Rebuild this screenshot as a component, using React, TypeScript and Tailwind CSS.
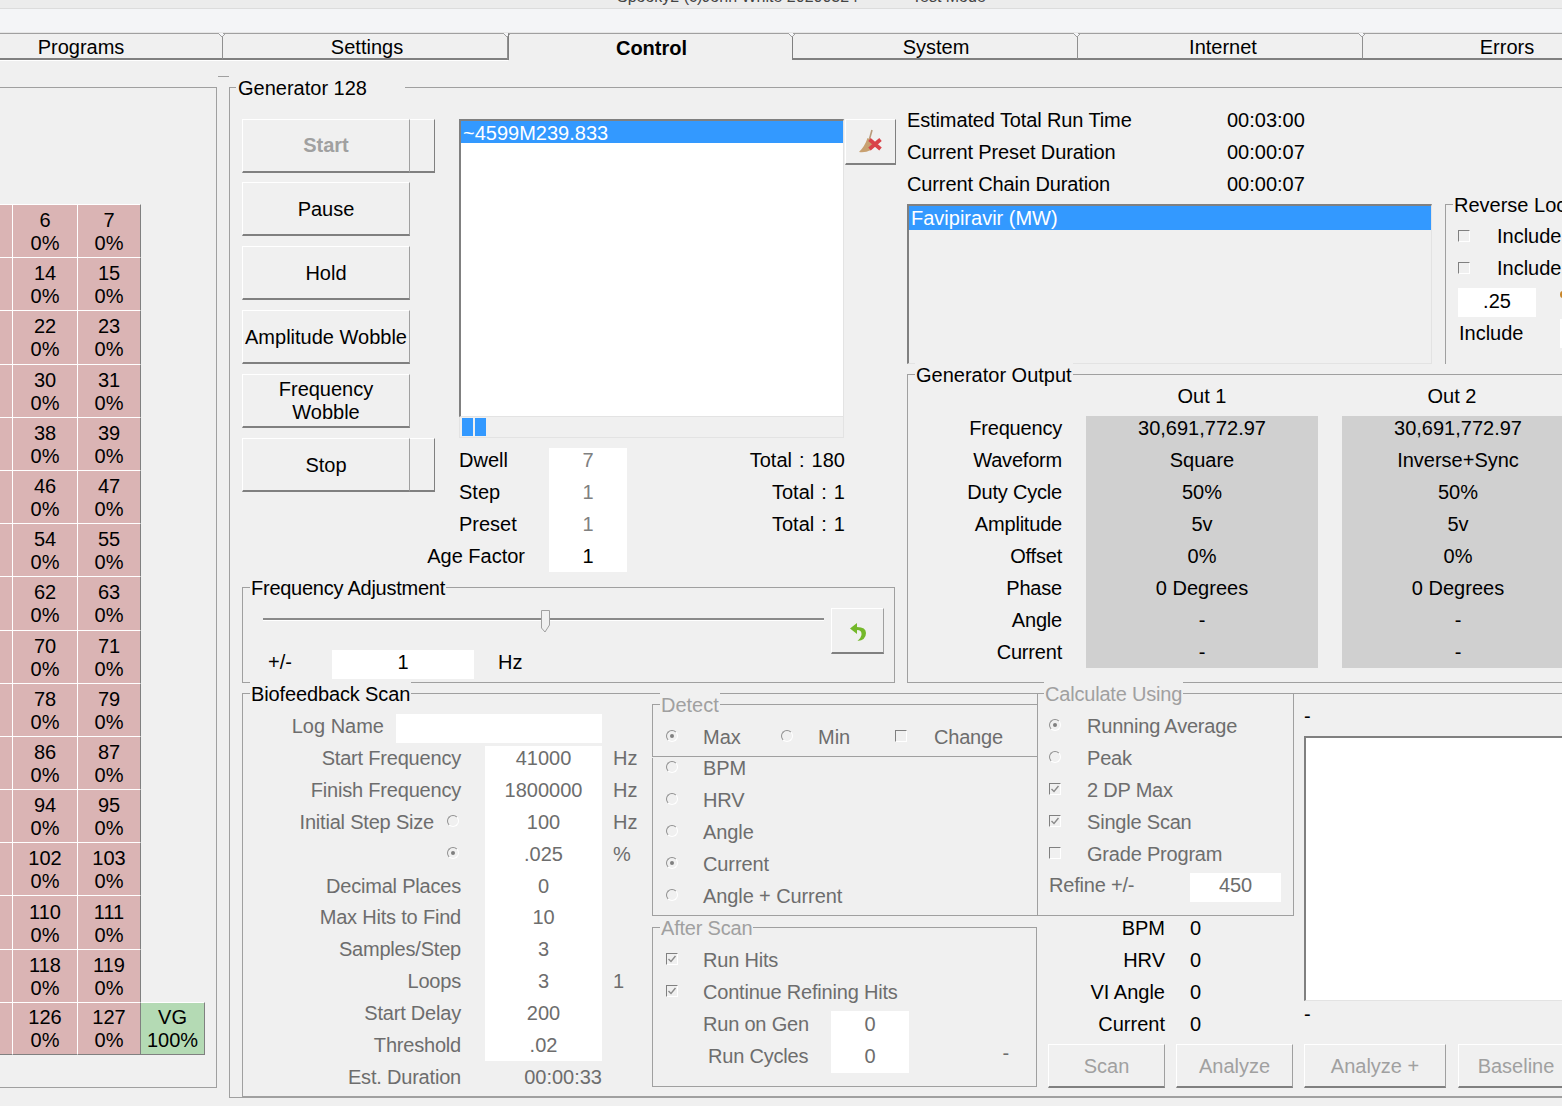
import React from "react";

const line = "border-[#a0a0a0]";
const dim = "text-[#6d6d6d]";

function Radio({ on = false }: { on?: boolean }) {
  return (
    <span className="mb-[2px] flex h-[12px] w-[12px] shrink-0 items-center justify-center rounded-full border border-[#909090] border-r-white border-b-white bg-[#f0f0f0]">
      {on && <span className="h-[4px] w-[4px] rounded-full bg-[#808080]" />}
    </span>
  );
}

function Check({ on = false }: { on?: boolean }) {
  return (
    <span className="mb-[2px] flex h-[12px] w-[12px] shrink-0 items-center justify-center border border-[#808080] border-r-white border-b-white bg-[#f0f0f0]">
      {on && (
        <svg width="10" height="10" viewBox="0 0 10 10">
          <path d="M1.5 5 L4 7.5 L8.5 2" fill="none" stroke="#8a8a8a" strokeWidth="1.4" />
        </svg>
      )}
    </span>
  );
}

function Legend({ text, gray = false, cls = "left-[7px]" }: { text: string; gray?: boolean; cls?: string }) {
  return (
    <span className={`absolute -top-[12px] ${cls} bg-[#f0f0f0] px-px leading-[24px] whitespace-nowrap ${gray ? "text-[#a0a0a0]" : "text-black"}`}>
      {text}
    </span>
  );
}

function Btn({ label, w = "w-[168px]", h = "h-[54px]", cls = "pt-[2px] text-black" }: { label: React.ReactNode; w?: string; h?: string; cls?: string }) {
  return (
    <div className={`${w} ${h} shrink-0 flex items-center justify-center text-center leading-[23px] whitespace-nowrap border border-t-white border-l-white border-r-[#a0a0a0] border-b-2 border-b-[#808080] bg-[#f0f0f0] ${cls}`}>
      {label}
    </div>
  );
}

function OptRow({ pl = "pl-[13px]", gap = "w-[25px]", node, text }: { pl?: string; gap?: string; node: React.ReactNode; text: string }) {
  return (
    <div className={`flex h-[32px] items-center ${pl} ${dim}`}>
      {node}
      <span className={`${gap} shrink-0`} />
      <span className="whitespace-nowrap">{text}</span>
    </div>
  );
}

function Tab({ label, active = false, shift }: { label: string; active?: boolean; shift: string }) {
  return (
    <div
      className={`relative flex h-[27px] w-[285px] shrink-0 items-center justify-center border-t border-t-[#a0a0a0] border-r pt-[2px] ${shift} ${
        active ? "border-r-[#808080] border-l border-l-[#808080] font-bold text-black" : "border-r-[#909090] border-b-2 border-b-[#808080] text-black"
      }`}
    >
      {label}
      <svg className="absolute -top-px -right-[4px]" width="8" height="5" viewBox="0 0 8 5">
        <path d="M0 0 L4 4 L8 0" fill="#f4f5f7" stroke="#a0a0a0" strokeWidth="1" />
      </svg>
    </div>
  );
}

const cellRows = Array.from({ length: 16 }, (_, i) => i);

function CellGrid() {
  return (
    <div className="grid h-[851px] w-[205px] grid-cols-[13px_64px_64px_64px] grid-rows-16">
      {cellRows.flatMap((i) => {
        const last = i === 15;
        const base = `bg-[#dab4b4] border-t border-t-white ${last ? "border-b border-b-[#808080]" : ""}`;
        const cells = [
          <div key={`a${i}`} className={`${base} border-r border-r-white`} />,
          <div key={`b${i}`} className={`${base} flex flex-col items-center justify-center pt-[2px] leading-[23px]`}>
            <span>{6 + i * 8}</span>
            <span>0%</span>
          </div>,
          <div key={`c${i}`} className={`${base} border-l border-l-white border-r border-r-[#808080] flex flex-col items-center justify-center pt-[2px] leading-[23px]`}>
            <span>{7 + i * 8}</span>
            <span>0%</span>
          </div>,
        ];
        cells.push(
          last ? (
            <div key="vg" className="flex flex-col items-center justify-center border-t border-t-white border-r border-r-[#808080] border-b border-b-[#808080] bg-[#b4dab4] pt-[2px] leading-[23px]">
              <span>VG</span>
              <span>100%</span>
            </div>
          ) : (
            <div key={`d${i}`} />
          )
        );
        return cells;
      })}
    </div>
  );
}

function GeneratorButtons() {
  return (
    <div className="flex w-[217px] shrink-0 flex-col">
      <div className="mb-[9px] flex">
        <Btn label="Start" cls="font-bold text-[#a0a0a0]" />
        <div className="h-[54px] w-[25px] border-t border-t-white border-r border-r-[#808080] border-b-2 border-b-[#808080]" />
      </div>
      <Btn label="Pause" />
      <div className="h-[10px]" />
      <Btn label="Hold" />
      <div className="h-[10px]" />
      <Btn label="Amplitude Wobble" />
      <div className="h-[10px]" />
      <Btn label={<span>Frequency<br />Wobble</span>} cls="text-black" />
      <div className="h-[10px]" />
      <div className="flex">
        <Btn label="Stop" />
        <div className="h-[54px] w-[25px] border-t border-t-white border-r border-r-[#808080] border-b-2 border-b-[#808080]" />
      </div>
    </div>
  );
}

function ProgramList() {
  return (
    <div className="flex w-[386px] shrink-0 flex-col">
      <div className="h-[298px] w-[385px] border-t-2 border-l-2 border-t-[#808080] border-l-[#808080] border-r border-b border-r-[#e3e3e3] border-b-[#e3e3e3] bg-white">
        <div className="h-[22px] bg-[#3399ff] pl-[2px] leading-[24px] text-white">~4599M239.833</div>
      </div>
      <div className="flex h-[21px] w-[385px] gap-[2px] border-l border-r border-b border-[#e3e3e3] pt-px pl-[2px]">
        <div className="h-[18px] w-[11px] bg-[#3399ff]" />
        <div className="h-[18px] w-[11px] bg-[#3399ff]" />
      </div>
      <div className="mt-[6px] flex h-[128px] w-[386px]">
        <div className="flex w-[66px] flex-col">
          {["Dwell", "Step", "Preset"].map((t) => (
            <div key={t} className="flex h-[32px] items-center">{t}</div>
          ))}
          <div className="flex h-[32px] items-center justify-end whitespace-nowrap">Age Factor</div>
        </div>
        <div className="mt-[4px] ml-[24px] flex h-[124px] w-[78px] flex-col bg-white">
          <div className="-mt-[4px] flex flex-col items-center">
            {["7", "1", "1"].map((t, i) => (
              <div key={i} className="flex h-[32px] items-center text-[#808080]">{t}</div>
            ))}
            <div className="flex h-[32px] items-center">1</div>
          </div>
        </div>
        <div className="flex flex-1 flex-col items-end">
          {["Total : 180", "Total : 1", "Total : 1"].map((t, i) => (
            <div key={i} className="flex h-[32px] items-center whitespace-nowrap [word-spacing:1.5px]">{t}</div>
          ))}
        </div>
      </div>
    </div>
  );
}

function ClearButton() {
  return (
    <div className="flex h-[46px] w-[51px] shrink-0 items-center justify-center border-t border-t-white border-l border-l-white border-r border-r-[#808080] border-b-2 border-b-[#808080]">
      <svg width="28" height="30" viewBox="0 0 28 30">
        <path d="M15 3 L12.5 12" stroke="#b89a7a" strokeWidth="1.6" fill="none" />
        <path d="M10.5 11 L16.5 14 L14 23 Q8 26 2 25 Q8 19 10.5 11 Z" fill="#c8a070" />
        <path d="M12.5 12.5 L23.5 22 M23.5 12.5 L12.5 22" stroke="#d9434a" strokeWidth="3.8" fill="none" />
      </svg>
    </div>
  );
}

function FrequencyAdjust() {
  return (
    <div className={`relative mt-[15px] flex h-[96px] w-[653px] border ${line}`}>
      <Legend text="Frequency Adjustment" cls="left-[7px] tracking-[-0.25px]" />
      <div className="w-[588px] shrink-0">
        <div className="relative mt-[30px] ml-[20px] h-[3px] w-[561px] border-t-2 border-t-[#8a8a8a] border-b border-b-white">
          <svg className="absolute -top-[10px] left-[277px]" width="12" height="23" viewBox="0 0 12 23">
            <path d="M1.5 .5 H9.5 V15 L5 22 L1.5 18 Z" fill="#f0f0f0" stroke="#a0a0a0" />
          </svg>
        </div>
        <div className="mt-[29px] flex h-[29px] items-center pl-[25px]">
          <span className="w-[64px] pb-[5px]">+/-</span>
          <div className="flex h-[29px] w-[142px] items-center justify-center bg-white pb-[5px]">1</div>
          <span className="ml-[24px] pb-[5px]">Hz</span>
        </div>
      </div>
      <div className="mt-[20px]">
        <Btn
          w="w-[53px]"
          h="h-[46px]"
          label={
            <svg width="20" height="24" viewBox="0 0 20 24">
              <path d="M9 3 L2 8.5 L9 14 L9 10 Q14 10 13.5 15 Q13 18 9.5 21 Q18 20 18 13 Q18 7 9 7 Z" fill="#74b82a" />
            </svg>
          }
        />
      </div>
    </div>
  );
}

function InfoRows() {
  const rows = [
    ["Estimated Total Run Time", "00:03:00"],
    ["Current Preset Duration", "00:00:07"],
    ["Current Chain Duration", "00:00:07"],
  ];
  return (
    <div className="flex flex-col">
      {rows.map(([a, b]) => (
        <div key={a} className="flex h-[32px] items-center whitespace-nowrap">
          <span className="w-[320px] tracking-[-0.12px]">{a}</span>
          <span>{b}</span>
        </div>
      ))}
    </div>
  );
}

function ReverseLock() {
  return (
    <div className={`relative ml-[13px] h-[160px] w-[142px] shrink-0 border-t border-l ${line}`}>
      <Legend text="Reverse Lock" cls="left-[7px]" />
      <div className="flex flex-col pt-[15px]">
        {[0, 1].map((i) => (
          <div key={i} className="flex h-[32px] items-center pl-[12px]">
            <span className="mt-[2px]"><Check /></span>
            <span className="ml-[27px]">Include</span>
          </div>
        ))}
        <div className="mt-[4px] flex items-start">
          <div className="ml-[12px] flex h-[29px] w-[78px] items-center justify-center bg-white pb-[4px]">.25</div>
          <span className="mt-[3px] ml-[24px] h-[7px] w-[3px] rounded-l-full bg-[#c8862a]" />
        </div>
        <div className="flex h-[32px] items-center pl-[13px]">
          <span className="w-[101px]">Include</span>
          <span className="h-[29px] w-[10px] bg-white" />
        </div>
      </div>
    </div>
  );
}

function OutColumn({ head, vals, headCls }: { head: string; vals: string[]; headCls: string }) {
  return (
    <div className="flex w-[232px] shrink-0 flex-col">
      <div className={`flex h-[33px] items-center justify-center ${headCls}`}>{head}</div>
      <div className="mt-[4px] flex h-[252px] flex-col bg-[#d0d0d0]">
        <div className="-mt-[4px] flex flex-col items-center">
          {vals.map((v, i) => (
            <div key={i} className="flex h-[32px] items-center">{v}</div>
          ))}
        </div>
      </div>
    </div>
  );
}

function GeneratorOutput() {
  const labels = ["Frequency", "Waveform", "Duty Cycle", "Amplitude", "Offset", "Phase", "Angle", "Current"];
  return (
    <div className={`relative mt-[10px] flex h-[309px] w-[680px] border-t border-l border-b ${line} pt-[4px]`}>
      <Legend text="Generator Output" cls="left-[7px]" />
      <div className="mt-[33px] flex w-[154px] shrink-0 flex-col items-end tracking-[-0.2px]">
        {labels.map((l) => (
          <div key={l} className="flex h-[32px] items-center">{l}</div>
        ))}
      </div>
      <div className="ml-[24px] flex gap-[24px]">
        <OutColumn head="Out 1" headCls="" vals={["30,691,772.97", "Square", "50%", "5v", "0%", "0 Degrees", "-", "-"]} />
        <OutColumn head="Out 2" headCls="pr-[12px]" vals={["30,691,772.97", "Inverse+Sync", "50%", "5v", "0%", "0 Degrees", "-", "-"]} />
      </div>
    </div>
  );
}

const bioRows: [string, string, string, number][] = [
  ["Start Frequency", "41000", "Hz", 32],
  ["Finish Frequency", "1800000", "Hz", 32],
  ["Initial Step Size", "100", "Hz", 32],
  ["", ".025", "%", 32],
  ["Decimal Places", "0", "", 31],
  ["Max Hits to Find", "10", "", 32],
  ["Samples/Step", "3", "", 32],
  ["Loops", "3", "1", 32],
  ["Start Delay", "200", "", 32],
  ["Threshold", ".02", "", 32],
];

function BioColumn() {
  return (
    <div className={`w-[409px] shrink-0 pt-[16px] ${dim}`}>
      <div className="flex h-[32px] items-start pt-[4px]">
        <div className="flex h-[29px] w-[141px] items-center justify-end pb-[5px]">Log Name</div>
        <div className="ml-[12px] h-[29px] w-[206px] bg-white" />
      </div>
      <div className="flex">
        <div className="flex w-[218px] flex-col tracking-[-0.2px]">
          {bioRows.map(([l, , , h], i) => (
            <div key={i} style={{ height: h }} className="flex items-center justify-end">
              {i === 2 || i === 3 ? (
                <>
                  <span className="whitespace-nowrap">{l}</span>
                  <span className="mr-[2px] ml-[13px]"><Radio on={i === 3} /></span>
                </>
              ) : (
                l
              )}
            </div>
          ))}
          <div className="flex h-[32px] items-center justify-end">Est. Duration</div>
        </div>
        <div className="ml-[24px] flex w-[117px] flex-col">
          <div className="mt-[4px] flex h-[315px] flex-col bg-white">
            <div className="-mt-[4px] flex flex-col items-center">
              {bioRows.map(([, v, , h], i) => (
                <div key={i} style={{ height: h }} className="flex items-center">{v}</div>
              ))}
            </div>
          </div>
          <div className="flex h-[32px] items-center justify-end">00:00:33</div>
        </div>
        <div className="ml-[11px] flex flex-col">
          {bioRows.map(([, , u, h], i) => (
            <div key={i} style={{ height: h }} className="flex items-center">{u}</div>
          ))}
        </div>
      </div>
    </div>
  );
}

function DetectColumn() {
  return (
    <div className={`w-[385px] shrink-0 pt-[10px] ${dim}`}>
      <div className={`relative h-[53px] border-t border-l border-b ${line}`}>
        <Legend text="Detect" gray cls="left-[7px]" />
        <div className="flex h-[51px] items-center pt-[13px] pl-[13px]">
          <Radio on />
          <span className="ml-[25px] w-[40px]">Max</span>
          <span className="ml-[38px] flex"><Radio /></span>
          <span className="ml-[25px] w-[36px]">Min</span>
          <span className="ml-[41px] flex"><Check /></span>
          <span className="ml-[27px] tracking-[-0.2px]">Change</span>
        </div>
      </div>
      <div className={`mt-px flex h-[158px] flex-col border-l border-b ${line}`}>
        <div className="-mt-[6px] flex flex-col tracking-[-0.1px]">
          <OptRow node={<Radio />} text="BPM" />
          <OptRow node={<Radio />} text="HRV" />
          <OptRow node={<Radio />} text="Angle" />
          <OptRow node={<Radio on />} text="Current" />
          <OptRow node={<Radio />} text="Angle + Current" />
        </div>
      </div>
      <div className={`relative mt-[11px] h-[160px] border ${line} pt-[16px] tracking-[-0.2px]`}>
        <Legend text="After Scan" gray cls="left-[7px]" />
        <OptRow node={<Check on />} text="Run Hits" />
        <OptRow node={<Check on />} text="Continue Refining Hits" />
        <div className="flex">
          <div className="flex w-[178px] flex-col pl-[50px]">
            <div className="flex h-[32px] items-center">Run on Gen</div>
            <div className="flex h-[32px] items-center pl-[5px]">Run Cycles</div>
          </div>
          <div className="mt-[3px] flex h-[62px] w-[78px] flex-col bg-white">
            <div className="-mt-[3px] flex flex-col items-center">
              <div className="flex h-[32px] items-center">0</div>
              <div className="flex h-[32px] items-center">0</div>
            </div>
          </div>
          <div className="flex h-[64px] w-[100px] items-end justify-end pb-[4px]">-</div>
        </div>
      </div>
    </div>
  );
}

function CalculateColumn() {
  const stats = [["BPM", "0"], ["HRV", "0"], ["VI Angle", "0"], ["Current", "0"]];
  return (
    <div className="w-[257px] shrink-0">
      <div className={`relative h-[223px] border ${line} pt-[16px] ${dim} tracking-[-0.2px]`}>
        <Legend text="Calculate Using" gray cls="left-[6px] tracking-[-0.2px]" />
        <OptRow pl="pl-[11px]" gap="w-[26px]" node={<Radio on />} text="Running Average" />
        <OptRow pl="pl-[11px]" gap="w-[26px]" node={<Radio />} text="Peak" />
        <OptRow pl="pl-[11px]" gap="w-[26px]" node={<Check on />} text="2 DP Max" />
        <OptRow pl="pl-[11px]" gap="w-[26px]" node={<Check on />} text="Single Scan" />
        <OptRow pl="pl-[11px]" gap="w-[26px]" node={<Check />} text="Grade Program" />
        <div className="flex h-[29px] items-start pl-[11px]">
          <span className="flex h-[29px] w-[141px] items-center">Refine +/-</span>
          <div className="mt-[3px] flex h-[29px] w-[91px] items-center justify-center bg-white pb-[5px]">450</div>
        </div>
      </div>
      <div className="-mt-[4px] flex flex-col">
        {stats.map(([a, b]) => (
          <div key={a} className="flex h-[32px] items-center">
            <span className="w-[128px] text-right">{a}</span>
            <span className="ml-[25px]">{b}</span>
          </div>
        ))}
      </div>
    </div>
  );
}

function RightOfCalc() {
  return (
    <div className="ml-[10px] w-[260px] shrink-0">
      <div className="flex h-[43px] items-center pt-[2px]">-</div>
      <div className="h-[265px] border-t-2 border-l-2 border-t-[#808080] border-l-[#808080] border-b border-b-[#e3e3e3] bg-white" />
      <div className="flex h-[26px] items-center">-</div>
    </div>
  );
}

function App() {
  return (
    <div className="h-[1106px] w-[1562px] overflow-hidden bg-[#f0f0f0] font-[Liberation_Sans,sans-serif] text-[20px] text-black">
      <div className="h-[9px] overflow-hidden border-b border-b-[#dcdcdc] bg-[#ececec]">
        <div className="-mt-[12px] flex h-[18px] items-center pl-[617px] text-[16px] leading-[18px] text-[#444444] whitespace-nowrap">
          <span className="w-[295px]">Spooky2 (c)John White 20200324</span>
          <span>Test Mode</span>
        </div>
      </div>
      <div className="h-[24px] border-b border-b-[#e6e6e6] bg-[#f4f5f7]" />
      <div className="-ml-[62px] flex w-[1800px]">
        <Tab label="Programs" shift="pl-[2px]" />
        <Tab label="Settings" shift="pl-[4px]" />
        <Tab label="Control" active shift="pl-[2px]" />
        <Tab label="System" shift="pl-[2px]" />
        <Tab label="Internet" shift="pl-[6px]" />
        <Tab label="Errors" shift="pl-[4px]" />
      </div>
      <div className="h-px w-[508px] bg-white" />
      <div className="flex">
        <div className={`mt-[26px] h-[1001px] w-[217px] shrink-0 border-t border-r border-b ${line} pt-[116px]`}>
          <CellGrid />
        </div>
        <div className="mt-[15px] ml-px h-px w-[11px] shrink-0 bg-[#a0a0a0]" />
        <div className={`relative mt-[26px] h-[1011px] w-[1400px] shrink-0 border-t border-l border-b ${line} pt-[16px] pl-[12px]`}>
          <span className="absolute -top-[12px] left-[6px] bg-[#f0f0f0] pr-[38px] pl-[2px] leading-[24px] whitespace-nowrap">Generator 128</span>
          <div className="flex">
            <div className="w-[653px] shrink-0 pt-[15px]">
              <div className="flex h-[453px]">
                <GeneratorButtons />
                <ProgramList />
                <ClearButton />
              </div>
              <FrequencyAdjust />
            </div>
            <div className="ml-[12px] w-[680px] shrink-0">
              <InfoRows />
              <div className="mt-[4px] flex">
                <div className="h-[160px] w-[525px] shrink-0 border-t-2 border-l-2 border-t-[#808080] border-l-[#808080] border-r border-b border-r-[#e3e3e3] border-b-[#e3e3e3]">
                  <div className="h-[24px] bg-[#3399ff] pl-[2px] leading-[24px] text-white">Favipiravir (MW)</div>
                </div>
                <ReverseLock />
              </div>
              <GeneratorOutput />
            </div>
          </div>
          <div className={`relative mt-[10px] flex h-[404px] border-t border-l border-b ${line}`}>
            <Legend text="Biofeedback Scan" cls="left-[7px] tracking-[-0.13px]" />
            <BioColumn />
            <DetectColumn />
            <div className="-mt-px flex w-[560px] shrink-0 flex-col">
              <div className="flex h-[351px]">
                <CalculateColumn />
                <RightOfCalc />
              </div>
              <div className="flex pl-[11px]">
                <Btn label="Scan" w="w-[117px]" h="h-[44px]" cls="mr-[11px] pt-[2px] text-[#a0a0a0]" />
                <Btn label="Analyze" w="w-[117px]" h="h-[44px]" cls="mr-[11px] pt-[2px] text-[#a0a0a0]" />
                <Btn label="Analyze +" w="w-[142px]" h="h-[44px]" cls="mr-[12px] pt-[2px] text-[#a0a0a0]" />
                <Btn label="Baseline" w="w-[116px]" h="h-[44px]" cls="pt-[2px] text-[#a0a0a0]" />
              </div>
            </div>
          </div>
        </div>
      </div>
    </div>
  );
}

export default App;
